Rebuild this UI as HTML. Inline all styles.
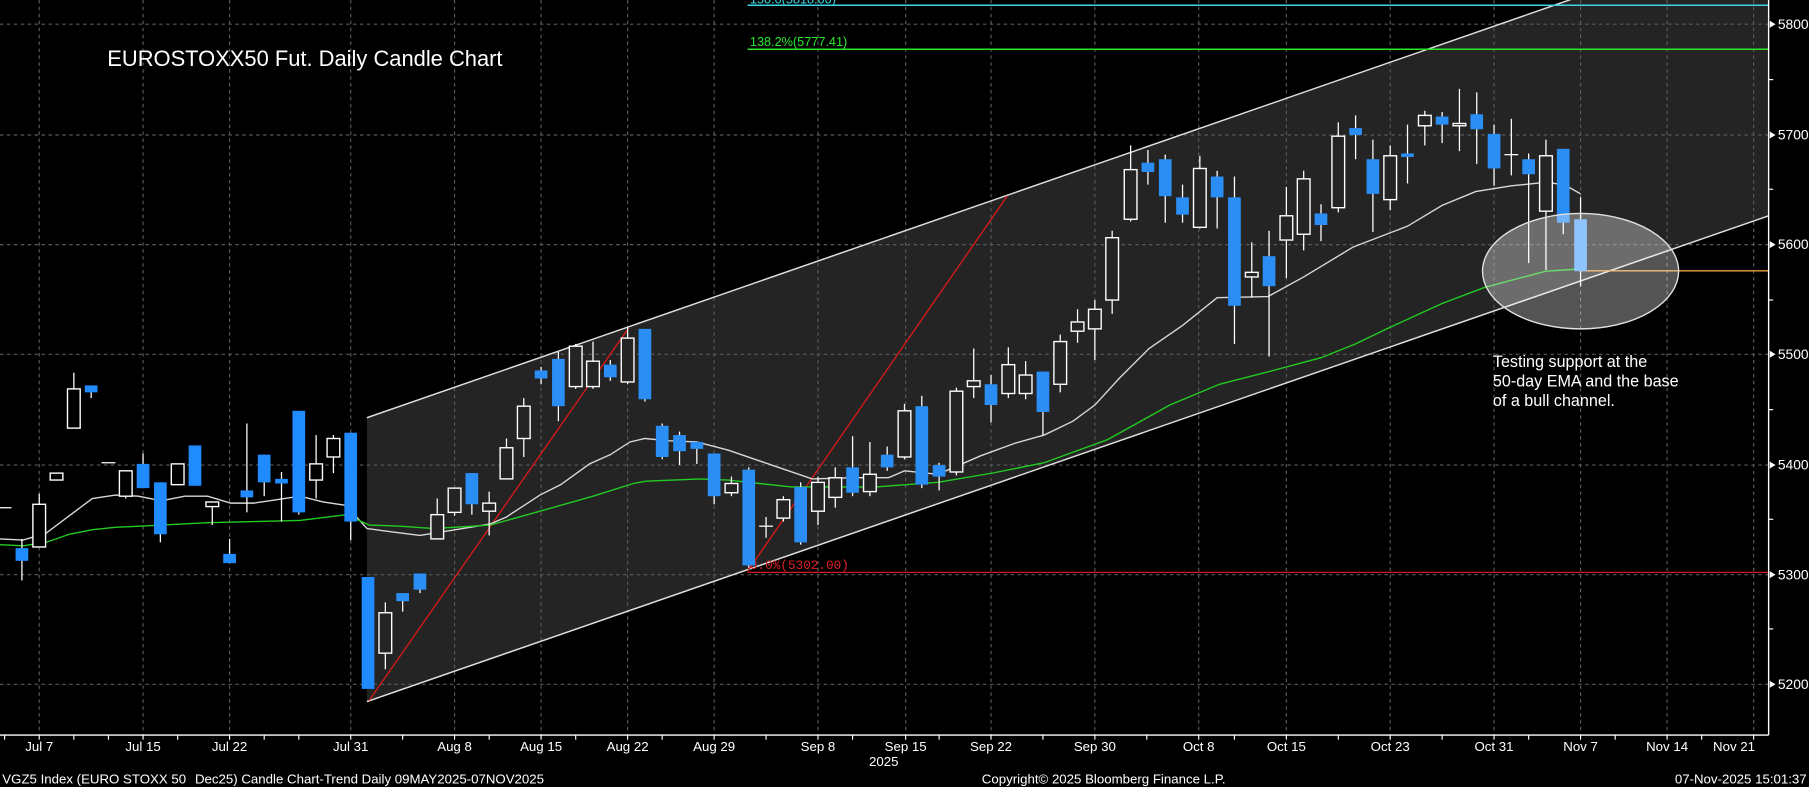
<!DOCTYPE html>
<html><head><meta charset="utf-8"><style>
html,body{margin:0;padding:0;background:#000;width:1809px;height:787px;overflow:hidden}
svg{display:block}
text{font-family:"Liberation Sans Narrow","Liberation Sans",sans-serif;fill:#fff}
.g{stroke:#5a5a5a;stroke-width:1;stroke-dasharray:3,3}
.w{fill:none;stroke:#fff;stroke-width:1.2}
.wi{stroke:#fff;stroke-width:1.1}
.b{fill:#1f8bff}
.bi{fill:#2a8ef5}
</style></head><body>
<svg width="1809" height="787" viewBox="0 0 1568 682" preserveAspectRatio="none" xmlns="http://www.w3.org/2000/svg">
<rect width="1568" height="682" fill="#000"/>
<polygon points="318,362 1533,-60 1533,187 318,608" fill="#242424"/>
<g class="g">
<line x1="0" y1="21" x2="1533" y2="21"/><line x1="0" y1="117" x2="1533" y2="117"/><line x1="0" y1="212" x2="1533" y2="212"/><line x1="0" y1="307" x2="1533" y2="307"/><line x1="0" y1="403" x2="1533" y2="403"/><line x1="0" y1="498" x2="1533" y2="498"/><line x1="0" y1="593" x2="1533" y2="593"/>
<line x1="34" y1="0" x2="34" y2="637"/><line x1="124" y1="0" x2="124" y2="637"/><line x1="199" y1="0" x2="199" y2="637"/><line x1="304" y1="0" x2="304" y2="637"/><line x1="394" y1="0" x2="394" y2="637"/><line x1="469" y1="0" x2="469" y2="637"/><line x1="544" y1="0" x2="544" y2="637"/><line x1="619" y1="0" x2="619" y2="637"/><line x1="709" y1="0" x2="709" y2="637"/><line x1="785" y1="0" x2="785" y2="637"/><line x1="859" y1="0" x2="859" y2="637"/><line x1="949" y1="0" x2="949" y2="637"/><line x1="1039" y1="0" x2="1039" y2="637"/><line x1="1115" y1="0" x2="1115" y2="637"/><line x1="1205" y1="0" x2="1205" y2="637"/><line x1="1295" y1="0" x2="1295" y2="637"/><line x1="1370" y1="0" x2="1370" y2="637"/><line x1="1445" y1="0" x2="1445" y2="637"/><line x1="1520" y1="0" x2="1520" y2="637"/>
</g>
<line x1="318" y1="362" x2="1533" y2="-60" stroke="#ddd" stroke-width="1.3"/>
<line x1="318" y1="608" x2="1533" y2="187" stroke="#ddd" stroke-width="1.3"/>
<line x1="648" y1="4.5" x2="1533" y2="4.5" stroke="#3cd6e6" stroke-width="1.3"/>
<text x="650" y="3" font-size="11" style="fill:#3cd6e6">150.0(5818.00)</text>
<line x1="648" y1="42.7" x2="1533" y2="42.7" stroke="#2ee62e" stroke-width="1.3"/>
<text x="650" y="40" font-size="11" style="fill:#2ee62e">138.2%(5777.41)</text>
<line x1="648" y1="496" x2="1533" y2="496" stroke="#d01820" stroke-width="1.1"/>
<text x="650" y="493" font-size="11" style="fill:#e0202a;font-family:'Liberation Mono',monospace">0.0%(5302.00)</text>
<line x1="1370" y1="234.7" x2="1533" y2="234.7" stroke="#f0a040" stroke-width="1.2"/>
<line x1="320" y1="607" x2="545" y2="284" stroke="#e01818" stroke-width="1.1"/>
<line x1="648" y1="495" x2="873" y2="170" stroke="#e01818" stroke-width="1.1"/>
<polyline fill="none" stroke="#d8d8d8" stroke-width="1.2" points="0,467 20,468 40,462 60,447 80,432 100,429 120,430 140,434 160,430 180,430 200,436 220,436 240,433 260,430 280,435 300,438 318,458 340,461 364,464 395,459 425,454 439,448 468,429 486,420 511,402 529,394 546,383 559,380 580,382 604,383 631,390 660,400 704,415 740,414 770,414 784,408 813,411 850,395 880,384 905,377 930,365 949,351 970,328 996,302 1025,282 1055,258 1099,257 1130,240 1173,214 1220,196 1250,178 1279,166 1310,161 1340,158 1356,160 1370,168"/>
<polyline fill="none" stroke="#22cc22" stroke-width="1.2" points="0,472 20,473 40,470 60,463 80,459 100,457 140,455 180,453 220,452 260,451 300,446 320,455 347,456 376,458 425,455 468,443 514,430 549,419 560,417 607,415 631,416 686,422 759,422 813,418 860,410 905,401 960,381 1014,351 1057,333 1100,322 1145,310 1175,298 1204,284 1250,263 1287,249 1340,235 1370,233"/>
<g class="wi">
<line x1="19" y1="467" x2="19" y2="503"/><line x1="34" y1="428" x2="34" y2="474"/><line x1="64" y1="323" x2="64" y2="371"/><line x1="79" y1="334" x2="79" y2="345"/><line x1="109" y1="408" x2="109" y2="432"/><line x1="124" y1="393" x2="124" y2="423"/><line x1="139" y1="418" x2="139" y2="470"/><line x1="184" y1="435" x2="184" y2="455"/><line x1="199" y1="467" x2="199" y2="488"/><line x1="214" y1="367" x2="214" y2="444"/><line x1="229" y1="394" x2="229" y2="430"/><line x1="244" y1="409" x2="244" y2="452"/><line x1="259" y1="356" x2="259" y2="446"/><line x1="274" y1="377" x2="274" y2="432"/><line x1="289" y1="377" x2="289" y2="410"/><line x1="304" y1="375" x2="304" y2="468"/>
<line x1="334" y1="522" x2="334" y2="580"/><line x1="349" y1="514" x2="349" y2="530"/><line x1="364" y1="497" x2="364" y2="514"/><line x1="379" y1="432" x2="379" y2="467"/><line x1="394" y1="423" x2="394" y2="447"/><line x1="409" y1="410" x2="409" y2="446"/><line x1="424" y1="426" x2="424" y2="464"/><line x1="439" y1="380" x2="439" y2="415"/><line x1="454" y1="345" x2="454" y2="396"/><line x1="469" y1="318" x2="469" y2="333"/><line x1="484" y1="305" x2="484" y2="365"/><line x1="499" y1="298" x2="499" y2="337"/><line x1="514" y1="296" x2="514" y2="337"/><line x1="529" y1="312" x2="529" y2="330"/><line x1="544" y1="283" x2="544" y2="333"/><line x1="559" y1="285" x2="559" y2="348"/><line x1="574" y1="367" x2="574" y2="398"/><line x1="589" y1="374" x2="589" y2="403"/><line x1="604" y1="383" x2="604" y2="402"/><line x1="619" y1="393" x2="619" y2="437"/><line x1="634" y1="413" x2="634" y2="430"/><line x1="649" y1="405" x2="649" y2="492"/><line x1="664" y1="448" x2="664" y2="466"/><line x1="679" y1="430" x2="679" y2="452"/><line x1="694" y1="418" x2="694" y2="472"/><line x1="709" y1="413" x2="709" y2="455"/><line x1="724" y1="405" x2="724" y2="440"/><line x1="739" y1="378" x2="739" y2="430"/><line x1="754" y1="383" x2="754" y2="430"/><line x1="769" y1="387" x2="769" y2="408"/><line x1="784" y1="350" x2="784" y2="398"/><line x1="799" y1="343" x2="799" y2="423"/><line x1="814" y1="401" x2="814" y2="425"/><line x1="829" y1="336" x2="829" y2="412"/><line x1="844" y1="302" x2="844" y2="345"/><line x1="859" y1="325" x2="859" y2="366"/><line x1="874" y1="301" x2="874" y2="345"/><line x1="889" y1="313" x2="889" y2="346"/><line x1="904" y1="322" x2="904" y2="377"/><line x1="919" y1="290" x2="919" y2="340"/><line x1="934" y1="268" x2="934" y2="297"/><line x1="949" y1="260" x2="949" y2="312"/><line x1="964" y1="200" x2="964" y2="272"/><line x1="980" y1="126" x2="980" y2="192"/><line x1="995" y1="130" x2="995" y2="160"/><line x1="1010" y1="134" x2="1010" y2="193"/><line x1="1025" y1="160" x2="1025" y2="193"/><line x1="1040" y1="135" x2="1040" y2="198"/><line x1="1055" y1="148" x2="1055" y2="198"/><line x1="1070" y1="153" x2="1070" y2="298"/><line x1="1085" y1="210" x2="1085" y2="258"/><line x1="1100" y1="200" x2="1100" y2="309"/><line x1="1115" y1="162" x2="1115" y2="241"/><line x1="1130" y1="148" x2="1130" y2="217"/><line x1="1145" y1="177" x2="1145" y2="209"/><line x1="1160" y1="106" x2="1160" y2="184"/><line x1="1175" y1="100" x2="1175" y2="138"/><line x1="1190" y1="121" x2="1190" y2="201"/><line x1="1205" y1="126" x2="1205" y2="182"/><line x1="1220" y1="108" x2="1220" y2="159"/><line x1="1235" y1="96" x2="1235" y2="126"/><line x1="1250" y1="97" x2="1250" y2="124"/><line x1="1265" y1="77" x2="1265" y2="131"/><line x1="1280" y1="80" x2="1280" y2="142"/><line x1="1295" y1="108" x2="1295" y2="161"/><line x1="1310" y1="103" x2="1310" y2="152"/><line x1="1325" y1="133" x2="1325" y2="228"/><line x1="1340" y1="121" x2="1340" y2="234"/><line x1="1355" y1="129" x2="1355" y2="203"/><line x1="1370" y1="171" x2="1370" y2="248"/>
<line x1="-2" y1="440" x2="10" y2="440"/><line x1="88" y1="401" x2="100" y2="401"/><line x1="658" y1="456" x2="670" y2="456"/><line x1="1304" y1="134" x2="1316" y2="134"/>
</g>
<g class="w" style="fill:#000">
<rect x="28.5" y="437" width="11" height="37"/><rect x="43.5" y="410" width="11" height="6"/><rect x="58.5" y="337" width="11" height="34"/><rect x="103.5" y="408" width="11" height="22"/><rect x="148.5" y="402" width="11" height="18"/><rect x="178.5" y="435" width="11" height="4"/><rect x="268.5" y="402" width="11" height="14"/><rect x="283.5" y="380" width="11" height="16"/>
</g>
<g class="w" style="fill:#242424">
<rect x="328.5" y="531" width="11" height="35"/><rect x="373.5" y="446" width="11" height="21"/><rect x="388.5" y="423" width="11" height="21"/><rect x="418.5" y="436" width="11" height="7"/><rect x="433.5" y="388" width="11" height="27"/><rect x="448.5" y="352" width="11" height="28"/><rect x="493.5" y="300" width="11" height="35"/><rect x="508.5" y="313" width="11" height="22"/><rect x="538.5" y="293" width="11" height="38"/><rect x="628.5" y="419" width="11" height="8"/><rect x="673.5" y="433" width="11" height="16"/><rect x="703.5" y="418" width="11" height="25"/><rect x="718.5" y="414" width="11" height="17"/><rect x="748.5" y="411" width="11" height="15"/><rect x="778.5" y="356" width="11" height="40"/><rect x="823.5" y="339" width="11" height="70"/><rect x="838.5" y="330" width="11" height="5"/><rect x="868.5" y="316" width="11" height="25"/><rect x="883.5" y="325" width="11" height="16"/><rect x="913.5" y="296" width="11" height="37"/><rect x="928.5" y="279" width="11" height="8"/><rect x="943.5" y="268" width="11" height="17"/><rect x="958.5" y="206" width="11" height="54"/><rect x="974.5" y="147" width="11" height="43"/><rect x="1034.5" y="146" width="11" height="51"/><rect x="1079.5" y="236" width="11" height="4"/><rect x="1109.5" y="187" width="11" height="21"/><rect x="1124.5" y="155" width="11" height="48"/><rect x="1154.5" y="118" width="11" height="62"/><rect x="1199.5" y="135" width="11" height="38"/><rect x="1229.5" y="100" width="11" height="9"/><rect x="1259.5" y="107" width="11" height="2"/><rect x="1334.5" y="135" width="11" height="48"/>
</g>
<g class="b">
<rect x="13.5" y="475" width="11" height="11"/><rect x="73.5" y="334" width="11" height="6"/><rect x="118.5" y="402" width="11" height="21"/><rect x="133.5" y="418" width="11" height="45"/><rect x="163.5" y="386" width="11" height="35"/><rect x="193.5" y="480" width="11" height="8"/><rect x="208.5" y="425" width="11" height="6"/><rect x="223.5" y="394" width="11" height="24"/><rect x="238.5" y="415" width="11" height="4"/><rect x="253.5" y="356" width="11" height="88"/><rect x="298.5" y="375" width="11" height="77"/><rect x="313.5" y="500" width="11" height="97"/>
</g>
<g class="bi">
<rect x="343.5" y="514" width="11" height="7"/><rect x="358.5" y="497" width="11" height="14"/><rect x="403.5" y="410" width="11" height="27"/><rect x="463.5" y="321" width="11" height="7"/><rect x="478.5" y="311" width="11" height="41"/><rect x="523.5" y="316" width="11" height="11"/><rect x="553.5" y="285" width="11" height="61"/><rect x="568.5" y="369" width="11" height="27"/><rect x="583.5" y="377" width="11" height="14"/><rect x="598.5" y="383" width="11" height="6"/><rect x="613.5" y="393" width="11" height="37"/><rect x="643.5" y="407" width="11" height="83"/><rect x="688.5" y="422" width="11" height="48"/><rect x="733.5" y="405" width="11" height="22"/><rect x="763.5" y="394" width="11" height="11"/><rect x="793.5" y="352" width="11" height="68"/><rect x="808.5" y="403" width="11" height="10"/><rect x="853.5" y="333" width="11" height="18"/><rect x="898.5" y="322" width="11" height="35"/><rect x="989.5" y="141" width="11" height="8"/><rect x="1004.5" y="138" width="11" height="32"/><rect x="1019.5" y="171" width="11" height="15"/><rect x="1049.5" y="153" width="11" height="18"/><rect x="1064.5" y="171" width="11" height="94"/><rect x="1094.5" y="222" width="11" height="26"/><rect x="1139.5" y="185" width="11" height="10"/><rect x="1169.5" y="111" width="11" height="6"/><rect x="1184.5" y="138" width="11" height="30"/><rect x="1214.5" y="133" width="11" height="3"/><rect x="1244.5" y="101" width="11" height="7"/><rect x="1274.5" y="99" width="11" height="13"/><rect x="1289.5" y="116" width="11" height="30"/><rect x="1319.5" y="138" width="11" height="13"/><rect x="1349.5" y="129" width="11" height="64"/>
</g>
<rect x="1364.5" y="190" width="11" height="45" fill="#5aa8ff"/>
<ellipse cx="1370" cy="235" rx="85" ry="50" fill="#ffffff" fill-opacity="0.33" stroke="#e0e0e0" stroke-width="1.2"/>
<text x="93" y="57" font-size="19" style="font-family:'Liberation Sans',sans-serif">EUROSTOXX50 Fut. Daily Candle Chart</text>
<g font-size="14" style="font-family:'Liberation Sans',sans-serif">
<text x="1294" y="318">Testing support at the</text>
<text x="1294" y="335">50-day EMA and the base</text>
<text x="1294" y="352">of a bull channel.</text>
</g>
<line x1="1533" y1="0" x2="1533" y2="637" stroke="#fff" stroke-width="1.2"/>
<line x1="0" y1="637" x2="1533" y2="637" stroke="#fff" stroke-width="1.2"/>
<g fill="#fff">
<polygon points="1534,18 1539,21 1534,24"/><polygon points="1534,114 1539,117 1534,120"/><polygon points="1534,209 1539,212 1534,215"/><polygon points="1534,304 1539,307 1534,310"/><polygon points="1534,400 1539,403 1534,406"/><polygon points="1534,495 1539,498 1534,501"/><polygon points="1534,590 1539,593 1534,596"/>
</g>
<g stroke="#fff" stroke-width="1">
<line x1="1533" y1="69" x2="1537" y2="69"/><line x1="1533" y1="164" x2="1537" y2="164"/><line x1="1533" y1="260" x2="1537" y2="260"/><line x1="1533" y1="355" x2="1537" y2="355"/><line x1="1533" y1="450" x2="1537" y2="450"/><line x1="1533" y1="545" x2="1537" y2="545"/>
<line x1="4" y1="637" x2="4" y2="641"/><line x1="34" y1="637" x2="34" y2="641"/><line x1="64" y1="637" x2="64" y2="641"/><line x1="94" y1="637" x2="94" y2="641"/><line x1="124" y1="637" x2="124" y2="641"/><line x1="154" y1="637" x2="154" y2="641"/><line x1="199" y1="637" x2="199" y2="641"/><line x1="229" y1="637" x2="229" y2="641"/><line x1="259" y1="637" x2="259" y2="641"/><line x1="304" y1="637" x2="304" y2="641"/><line x1="349" y1="637" x2="349" y2="641"/><line x1="394" y1="637" x2="394" y2="641"/><line x1="424" y1="637" x2="424" y2="641"/><line x1="469" y1="637" x2="469" y2="641"/><line x1="499" y1="637" x2="499" y2="641"/><line x1="544" y1="637" x2="544" y2="641"/><line x1="574" y1="637" x2="574" y2="641"/><line x1="619" y1="637" x2="619" y2="641"/><line x1="664" y1="637" x2="664" y2="641"/><line x1="709" y1="637" x2="709" y2="641"/><line x1="739" y1="637" x2="739" y2="641"/><line x1="785" y1="637" x2="785" y2="641"/><line x1="814" y1="637" x2="814" y2="641"/><line x1="859" y1="637" x2="859" y2="641"/><line x1="904" y1="637" x2="904" y2="641"/><line x1="949" y1="637" x2="949" y2="641"/><line x1="994" y1="637" x2="994" y2="641"/><line x1="1039" y1="637" x2="1039" y2="641"/><line x1="1070" y1="637" x2="1070" y2="641"/><line x1="1115" y1="637" x2="1115" y2="641"/><line x1="1160" y1="637" x2="1160" y2="641"/><line x1="1205" y1="637" x2="1205" y2="641"/><line x1="1250" y1="637" x2="1250" y2="641"/><line x1="1295" y1="637" x2="1295" y2="641"/><line x1="1325" y1="637" x2="1325" y2="641"/><line x1="1370" y1="637" x2="1370" y2="641"/><line x1="1400" y1="637" x2="1400" y2="641"/><line x1="1445" y1="637" x2="1445" y2="641"/><line x1="1475" y1="637" x2="1475" y2="641"/><line x1="1520" y1="637" x2="1520" y2="641"/>
</g>
<g font-size="12">
<text x="1541" y="25">5800</text><text x="1541" y="121">5700</text><text x="1541" y="216">5600</text><text x="1541" y="311">5500</text><text x="1541" y="407">5400</text><text x="1541" y="502">5300</text><text x="1541" y="597">5200</text>
</g>
<g font-size="11.5" text-anchor="middle">
<text x="34" y="651">Jul 7</text><text x="124" y="651">Jul 15</text><text x="199" y="651">Jul 22</text><text x="304" y="651">Jul 31</text><text x="394" y="651">Aug 8</text><text x="469" y="651">Aug 15</text><text x="544" y="651">Aug 22</text><text x="619" y="651">Aug 29</text><text x="709" y="651">Sep 8</text><text x="785" y="651">Sep 15</text><text x="859" y="651">Sep 22</text><text x="949" y="651">Sep 30</text><text x="1039" y="651">Oct 8</text><text x="1115" y="651">Oct 15</text><text x="1205" y="651">Oct 23</text><text x="1295" y="651">Oct 31</text><text x="1370" y="651">Nov 7</text><text x="1445" y="651">Nov 14</text><text x="1503" y="651">Nov 21</text>
<text x="766" y="664">2025</text>
</g>
<g font-size="11.5">
<text x="2" y="679">VGZ5 Index (EURO STOXX 50</text>
<text x="169" y="679">Dec25) Candle Chart-Trend Daily 09MAY2025-07NOV2025</text>
<text x="851" y="679">Copyright© 2025 Bloomberg Finance L.P.</text>
<text x="1566" y="679" text-anchor="end">07-Nov-2025 15:01:37</text>
</g>
</svg>
</body></html>
